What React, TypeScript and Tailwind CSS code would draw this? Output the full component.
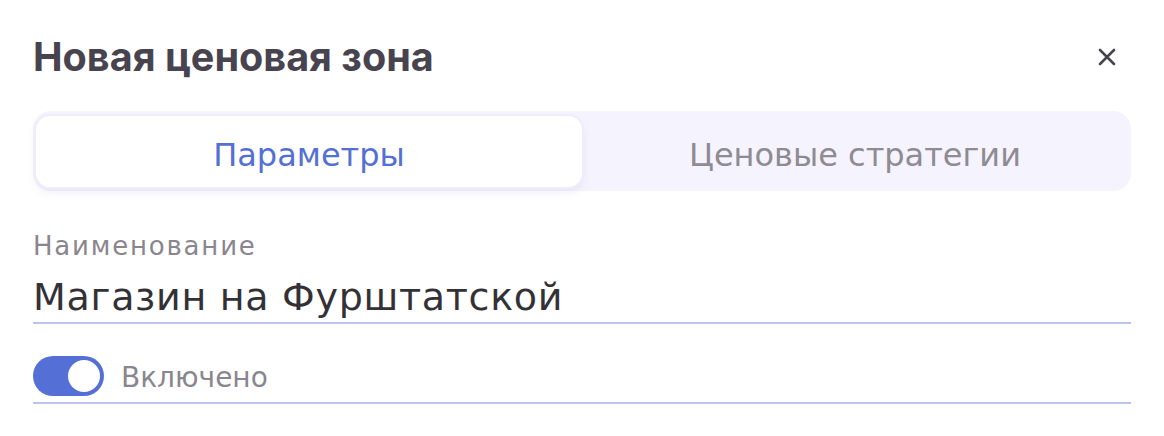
import { useState } from "react";

const tabs = ["Параметры", "Ценовые стратегии"];

export default function App() {
  const [active, setActive] = useState(0);
  const [enabled, setEnabled] = useState(true);

  return (
    <div className="h-[436px] w-[1164px] bg-white px-[33px] pt-[31px] font-['DejaVu_Sans',sans-serif]">
      <div className="flex h-[52px] items-center justify-between">
        <h1 className="font-['Inter',sans-serif] text-[39.6px] font-bold leading-[52px] text-[#48444f]">
          Новая ценовая зона
        </h1>
        <button className="mr-[8px] flex h-[32px] w-[32px] items-center justify-center text-[#48444f]">
          <svg width="20" height="20" viewBox="0 0 20 20" fill="none">
            <path d="M3 3L17 17M17 3L3 17" stroke="currentColor" strokeWidth="2.6" strokeLinecap="round" />
          </svg>
        </button>
      </div>

      <div className="mt-[28px] flex h-[80px] rounded-[18px] bg-[#f5f3fe] px-[3px] pb-[4px] pt-[5px]">
        {tabs.map((tab, i) => (
          <button
            key={tab}
            onClick={() => setActive(i)}
            className={
              i === active
                ? "flex flex-1 items-center justify-center rounded-[14px] bg-white pt-[6px] text-[32px] leading-[32px] text-[#5470d6] shadow-[0_5px_10px_rgba(120,110,180,0.12)] ring-2 ring-[#efecfc]"
                : "flex flex-1 items-center justify-center rounded-[14px] pt-[6px] text-[32px] leading-[32px] text-[#8e8b93]"
            }
          >
            {tab}
          </button>
        ))}
      </div>

      <div className="mt-[40px]">
        <label className="block pt-[1px] text-[26px] leading-[29px] tracking-[1.8px] text-[#8a868f]">Наименование</label>
        <div className="mt-[12px] border-b-2 border-[#bcc3ed] text-[38px] leading-[49px] tracking-[0.7px] text-[#333136]">
          Магазин на Фурштатской
        </div>
      </div>

      <div className="mt-[32px] flex items-center gap-[17px] border-b-2 border-[#bcc3ed] pb-[6px]">
        <button
          onClick={() => setEnabled(!enabled)}
          className={
            enabled
              ? "flex h-[40px] w-[71px] items-center justify-end rounded-full bg-[#5470d6] px-[4px]"
              : "flex h-[40px] w-[71px] items-center justify-start rounded-full bg-[#d3d1d8] px-[4px]"
          }
        >
          <span className="block h-[32px] w-[32px] rounded-full bg-white" />
        </button>
        <span className="pt-[3px] text-[28px] leading-[32px] text-[#8a868f]">Включено</span>
      </div>
    </div>
  );
}
